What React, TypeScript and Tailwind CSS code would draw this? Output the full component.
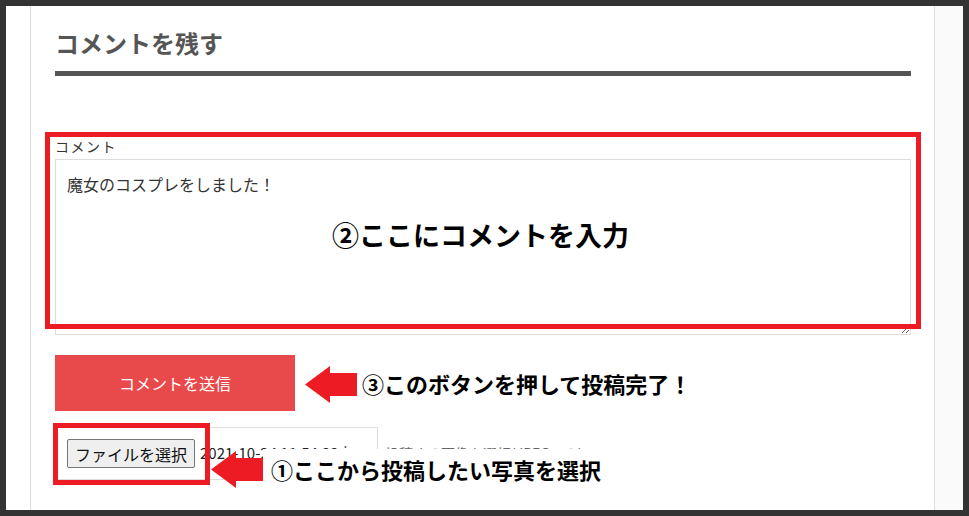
import React from "react";

function Arrow({ className }: { className: string }) {
  return (
    <svg className={className} viewBox="0 0 52 37" width="52" height="37">
      <path d="M0 18.5 L25 0 L25 7 L52 7 L52 30 L25 30 L25 37 Z" fill="#ed1c24" />
    </svg>
  );
}

export default function App() {
  return (
    <div className="relative w-[969px] h-[516px] bg-[#333333] p-[6px] overflow-hidden [font-family:'Noto_Sans_CJK_JP','Noto_Sans',sans-serif]">
      <div className="flex h-full bg-white">
        <div className="w-[24px] shrink-0 bg-white" />
        <div className="w-[905px] shrink-0 border-l border-r border-[#dedede] pl-[24px] pr-[23px] pt-[19px]">
          <div className="border-b-[5px] border-[#555555] pb-[10px]">
            <h2 className="text-[24px] leading-[36px] font-bold text-[#555555]">コメントを残す</h2>
          </div>
          <div className="mt-[60px] text-[14px] leading-[20px] tracking-[1.5px] text-[#333333]">コメント</div>
          <textarea
            readOnly
            value="魔女のコスプレをしました！"
            className="mt-[3px] block w-[856px] h-[176px] border border-[#dddddd] pl-[11px] pt-[12px] text-[16px] leading-[24px] text-[#333333] outline-none [font-family:'Noto_Sans_CJK_JP',sans-serif]"
          />
          <button className="mt-[20px] flex w-[240px] h-[56px] items-center justify-center bg-[#e84a4b] text-[16px] text-white">
            コメントを送信
          </button>
          <div className="mt-[16px] flex items-center">
            <div className="flex w-[323px] h-[53px] items-center border border-[#dddddd] pl-[11px] overflow-hidden">
              <span className="flex h-[29px] w-[128px] shrink-0 items-center justify-center rounded-[2px] border border-[#767676] bg-[#efefef] text-[16px] text-[#111111]">
                ファイルを選択
              </span>
              <span className="ml-[5px] whitespace-nowrap text-[15px] text-[#222222]">2021-10-24 11:54:33.jpg</span>
            </div>
            <span className="ml-[7px] text-[14px] text-[#666666] whitespace-nowrap">投稿する画像を選択(JPEGのみ)</span>
          </div>
        </div>
        <div className="flex-1 bg-[#fafafa]" />
      </div>

      {/* annotations */}
      <div className="absolute left-[45px] top-[132px] w-[876px] h-[197px] border-[5px] border-[#ed1c24]" />
      <div className="absolute left-[332px] top-[217px] text-[27px] leading-[36px] font-bold text-black whitespace-nowrap">
        ②ここにコメントを入力
      </div>

      <Arrow className="absolute left-[305px] top-[366px]" />
      <div className="absolute left-[362px] top-[368px] text-[22px] leading-[30px] font-bold text-black whitespace-nowrap">
        ③このボタンを押して投稿完了！
      </div>

      <div className="absolute left-[53px] top-[423px] w-[157px] h-[62px] border-[5px] border-[#ed1c24]" />
      <div className="absolute left-[263px] top-[449px] w-[350px] h-[41px] bg-white flex items-center pl-[8px] text-[22px] font-bold text-black whitespace-nowrap">
        ①ここから投稿したい写真を選択
      </div>
      <Arrow className="absolute left-[211px] top-[451px]" />
    </div>
  );
}
